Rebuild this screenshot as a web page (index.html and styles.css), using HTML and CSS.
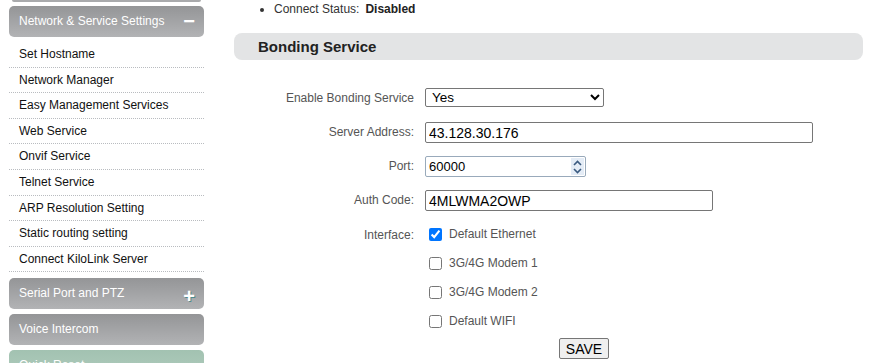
FILE: index.html
```html
<!DOCTYPE html>
<html lang="en">

<head>
    <meta charset="UTF-8">
    <title>Bonding Service</title>
    <link rel="stylesheet" href="styles.css">
</head>

<body>
    <div class="page">
        <div class="sidebar">
            <div class="menu-tail"></div>
            <div class="menu-head">Network &amp; Service Settings <span class="toggle">&minus;</span></div>
            <ul class="menu-list">
                <li>Set Hostname</li>
                <li>Network Manager</li>
                <li>Easy Management Services</li>
                <li>Web Service</li>
                <li>Onvif Service</li>
                <li>Telnet Service</li>
                <li>ARP Resolution Setting</li>
                <li>Static routing setting</li>
                <li>Connect KiloLink Server</li>
            </ul>
            <div class="menu-head">Serial Port and PTZ <span class="toggle plus">+</span></div>
            <div class="menu-head">Voice Intercom</div>
            <div class="menu-head green">Quick Reset</div>
        </div>

        <div class="main">
            <ul class="status">
                <li>Connect Status:<b>Disabled</b></li>
            </ul>
            <div class="section-title">Bonding Service</div>

            <div class="form">
                <label class="field-label">Enable Bonding Service</label>
                <div class="field">
                    <select class="sel">
                        <option>Yes</option>
                        <option>No</option>
                    </select>
                </div>

                <label class="field-label">Server Address:</label>
                <div class="field"><input type="text" class="inp wide" value="43.128.30.176"></div>

                <label class="field-label">Port:</label>
                <div class="field">
                    <div class="num-wrap">
                        <input type="text" class="inp port" value="60000">
                        <span class="spin">
                            <svg width="11" height="18" viewBox="0 0 11 18">
                                <path d="M2 7 L5.5 3.5 L9 7" fill="none" stroke="#3a5a80" stroke-width="1.6"/>
                                <path d="M2 11 L5.5 14.5 L9 11" fill="none" stroke="#3a5a80" stroke-width="1.6"/>
                            </svg>
                        </span>
                    </div>
                </div>

                <label class="field-label">Auth Code:</label>
                <div class="field"><input type="text" class="inp code" value="4MLWMA2OWP"></div>

                <label class="field-label check-label">Interface:</label>
                <div class="checks">
                    <label class="chk"><input type="checkbox" checked> Default Ethernet</label>
                    <label class="chk"><input type="checkbox"> 3G/4G Modem 1</label>
                    <label class="chk"><input type="checkbox"> 3G/4G Modem 2</label>
                    <label class="chk"><input type="checkbox"> Default WIFI</label>
                </div>
            </div>

            <div class="actions">
                <button class="save">SAVE</button>
            </div>
        </div>
    </div>
</body>

</html>
```

FILE: styles.css
```css
body {
    margin: 0;
    font-family: "Liberation Sans", Arial, sans-serif;
    background-color: #fff;
    overflow: hidden;
}

.page {
    display: flex;
    align-items: flex-start;
}

/* left menu */
.sidebar {
    width: 195px;
    margin-left: 9px;
    flex-shrink: 0;
}

.menu-tail {
    height: 2px;
    margin: 0 3px;
    background-color: #a9aaac;
    border-radius: 0 0 4px 4px;
}

.menu-head {
    height: 31px;
    margin-top: 5px;
    padding-left: 10px;
    padding-right: 8px;
    border-radius: 5px;
    background: linear-gradient(#949597, #b2b3b5);
    color: #fff;
    font-size: 12px;
    line-height: 29px;
    display: flex;
    justify-content: space-between;
    align-items: center;
}

.menu-tail + .menu-head {
    margin-top: 4px;
}

.menu-list + .menu-head {
    margin-top: 6px;
}

.menu-head.green {
    background: linear-gradient(#a2c2b1, #b3cdbf);
}

.toggle {
    font-size: 20px;
    font-weight: bold;
    width: 14px;
    text-align: center;
    color: #fff;
}

.toggle.plus {
    padding-top: 6px;
    text-shadow: 1px 1px 0 #4f8a8c;
}

.menu-list {
    list-style: none;
    margin: 0;
    padding: 5px 0 0;
}

.menu-list li {
    height: 24.6px;
    line-height: 24px;
    padding-left: 10px;
    font-size: 12px;
    color: #111;
    border-bottom: 1px dotted #b9bcc0;
}

/* right content */
.main {
    width: 629px;
    margin-left: 30px;
}

.status {
    margin: 0;
    padding: 2px 0 0 40px;
    font-size: 12px;
    color: #333;
    line-height: 15px;
}

.status b {
    color: #222;
    margin-left: 6px;
}

.section-title {
    margin-top: 16px;
    height: 27px;
    line-height: 27px;
    padding-left: 24px;
    border-radius: 8px;
    background-color: #e3e4e5;
    font-size: 15px;
    font-weight: bold;
    color: #222;
}

.form {
    display: grid;
    grid-template-columns: 180px 1fr;
    column-gap: 11px;
    margin-top: 27px;
}

.field-label {
    font-size: 12px;
    color: #555;
    text-align: right;
    height: 34px;
    line-height: 23px;
}

.field {
    height: 34px;
}

.sel {
    width: 179px;
    height: 19px;
    font-family: "Liberation Sans", Arial, sans-serif;
    font-size: 13.5px;
    border: 1px solid #767676;
    border-radius: 2px;
    padding: 0 2px;
    background-color: #fff;
    color: #000;
    margin-top: 1px;
}

.inp {
    height: 21px;
    box-sizing: border-box;
    border: 1px solid #767676;
    border-radius: 2px;
    padding: 0 3px;
    font-family: "Liberation Sans", Arial, sans-serif;
    font-size: 14px;
    color: #000;
    margin-top: 1px;
}

.wide {
    width: 388px;
}

.code {
    width: 288px;
}

.num-wrap {
    position: relative;
    width: 161px;
}

.port {
    width: 161px;
    font-size: 13px;
    border-color: #9ab;
}

.spin {
    position: absolute;
    right: 2px;
    top: 3px;
    width: 13px;
    height: 17px;
    background-color: #e4ecf6;
    display: flex;
    align-items: center;
    justify-content: center;
}

.check-label {
    height: 29px;
    line-height: 16px;
    padding-top: 4px;
}

.checks {
    display: flex;
    flex-direction: column;
    padding-top: 4px;
}

.chk {
    height: 29px;
    display: flex;
    align-items: flex-start;
    font-size: 12px;
    color: #555;
    line-height: 15px;
    padding-left: 4px;
}

.chk input {
    width: 13px;
    height: 13px;
    margin: 1px 7px 0 0;
    accent-color: #0075ff;
}

.actions {
    margin-top: -5px;
    padding-left: 325px;
}

.save {
    width: 50px;
    height: 21px;
    padding: 0;
    font-family: "Liberation Sans", Arial, sans-serif;
    font-size: 14px;
    color: #000;
    background-color: #efefef;
    border: 1px solid #767676;
    border-radius: 2px;
}
```
